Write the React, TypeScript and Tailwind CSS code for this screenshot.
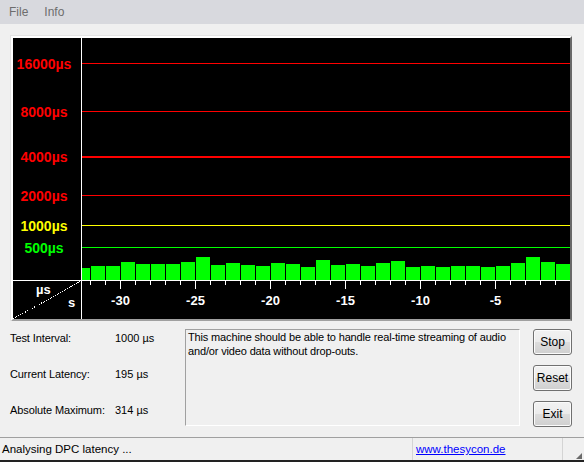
import React from "react";

const bars = [12, 14, 14, 18, 16, 16, 16, 18, 23, 15, 17, 15, 14, 17, 16, 13, 20, 15, 16, 14, 17, 19, 13, 14, 13, 14, 14, 13, 14, 17, 23, 18, 16];

const gridLines = [
  { label: "16000µs", y: 25, h: 1, line: "#ff0000", text: "#ff0000" },
  { label: "8000µs", y: 73, h: 1, line: "#ff0000", text: "#ff0000" },
  { label: "4000µs", y: 118, h: 2, line: "#ff0000", text: "#ff0000" },
  { label: "2000µs", y: 157, h: 1, line: "#ff0000", text: "#ff0000" },
  { label: "1000µs", y: 187, h: 1, line: "#ffff00", text: "#ffff00" },
  { label: "500µs", y: 209, h: 1, line: "#00ff00", text: "#00ff00" },
];

const AXIS = 242;

function LatencyChart() {
  const ticks = Array.from({ length: 32 }, (_, j) => 77 + 15 * j);
  return (
    <svg width={557} height={281} shapeRendering="crispEdges" className="block bg-black font-['Liberation_Sans',Arial,sans-serif]">
      {gridLines.map((g) => (
        <g key={g.label}>
          <rect x={69} y={g.y} width={488} height={g.h} fill={g.line} />
          <text x={31} y={g.y + 5.5} textAnchor="middle" fontSize={14} fontWeight={700} fill={g.text}>
            {g.label}
          </text>
        </g>
      ))}

      {bars.map((h, k) => {
        const x = 63 + 15 * k;
        const left = Math.max(x, 69);
        return <rect key={k} x={left} y={AXIS - h} width={x + 14 - left} height={h} fill="#00ff00" />;
      })}

      <rect x={68} y={0} width={1} height={281} fill="#ffffff" />
      <rect x={0} y={AXIS} width={557} height={1} fill="#ffffff" />

      {ticks.map((x, j) => {
        const big = (j - 2) % 5 === 0;
        return <rect key={x} x={x} y={AXIS + 1} width={1} height={big ? 8 : 4} fill="#ffffff" />;
      })}
      {[-30, -25, -20, -15, -10, -5].map((s, i) => (
        <text key={s} x={107.5 + 75 * i} y={267} textAnchor="middle" fontSize={13} fontWeight={700} fill="#ffffff">
          {s}
        </text>
      ))}

      <line x1={0} y1={281} x2={68} y2={243} stroke="#ffffff" strokeWidth={1} strokeDasharray="1 1" />
      <text x={23} y={256} fontSize={13} fontWeight={700} fill="#ffffff">
        µs
      </text>
      <text x={55} y={269} fontSize={13} fontWeight={700} fill="#ffffff">
        s
      </text>
    </svg>
  );
}

function WinButton({ label }: { label: string }) {
  return (
    <button className="w-[39px] h-[26px] rounded-[3px] border border-[#707070] bg-[linear-gradient(to_bottom,#f2f2f2,#ebebeb_50%,#dddddd_50%,#cfcfcf)] shadow-[inset_0_0_0_1px_#fbfbfb] text-[12px] text-black leading-none">
      {label}
    </button>
  );
}

const stats = [
  { label: "Test Interval:", value: "1000 µs" },
  { label: "Current Latency:", value: "195 µs" },
  { label: "Absolute Maximum:", value: "314 µs" },
];

export default function App() {
  return (
    <div className="w-[584px] h-[462px] overflow-hidden bg-[#f0f0f0] flex flex-col font-['Liberation_Sans',Arial,sans-serif] text-black">
      <div className="h-[24px] bg-[#d8d9de] flex items-center text-[12px] text-[#6d6d6d]">
        <span className="ml-[9px]">File</span>
        <span className="ml-[16px]">Info</span>
      </div>

      <div className="mt-[11px] ml-[10px] self-start border-t border-l border-[#e3e3e3]">
        <div className="border-t-2 border-l-2 border-r-2 border-b-2 border-t-white border-l-white border-r-[#696969] border-b-[#a0a0a0]">
          <LatencyChart />
        </div>
      </div>

      <div className="flex h-[116px] pt-[8px] pl-[10px] text-[11px] leading-[14px]">
        <div className="w-[175px] flex flex-col gap-[22px] pt-[2px]">
          {stats.map((s) => (
            <div key={s.label} className="flex">
              <span className="w-[105px] tracking-[-0.1px]">{s.label}</span>
              <span>{s.value}</span>
            </div>
          ))}
        </div>
        <div className="w-[335px] h-[97px] border border-t-[#a0a0a0] border-l-[#a0a0a0] border-r-white border-b-white px-[2px] tracking-[-0.15px]">
          This machine should be able to handle real-time streaming of audio and/or video data without drop-outs.
        </div>
        <div className="ml-[13px] flex flex-col gap-[10px]">
          <WinButton label="Stop" />
          <WinButton label="Reset" />
          <WinButton label="Exit" />
        </div>
      </div>

      <div className="h-[25px] flex border-t border-t-[#a0a0a0] border-b-2 border-b-[#222] text-[11.5px]">
        <div className="w-[413px] pl-[2px] pt-[2px] flex items-center border-r border-[#d4d4d4]">
          Analysing DPC latency ...
        </div>
        <div className="w-[150px] pl-[3px] pt-[2px] flex items-center border-r border-[#d4d4d4]">
          <span className="text-[#0000ff] underline text-[11.5px]">www.thesycon.de</span>
        </div>
        <div className="flex-1 flex items-end justify-end pr-[2px] pb-[1px]">
          <svg width={6} height={6} viewBox="0 0 6 6">
            <path d="M6 0 L6 6 L0 6 Z" fill="#6b6b6b" />
          </svg>
        </div>
      </div>
    </div>
  );
}
